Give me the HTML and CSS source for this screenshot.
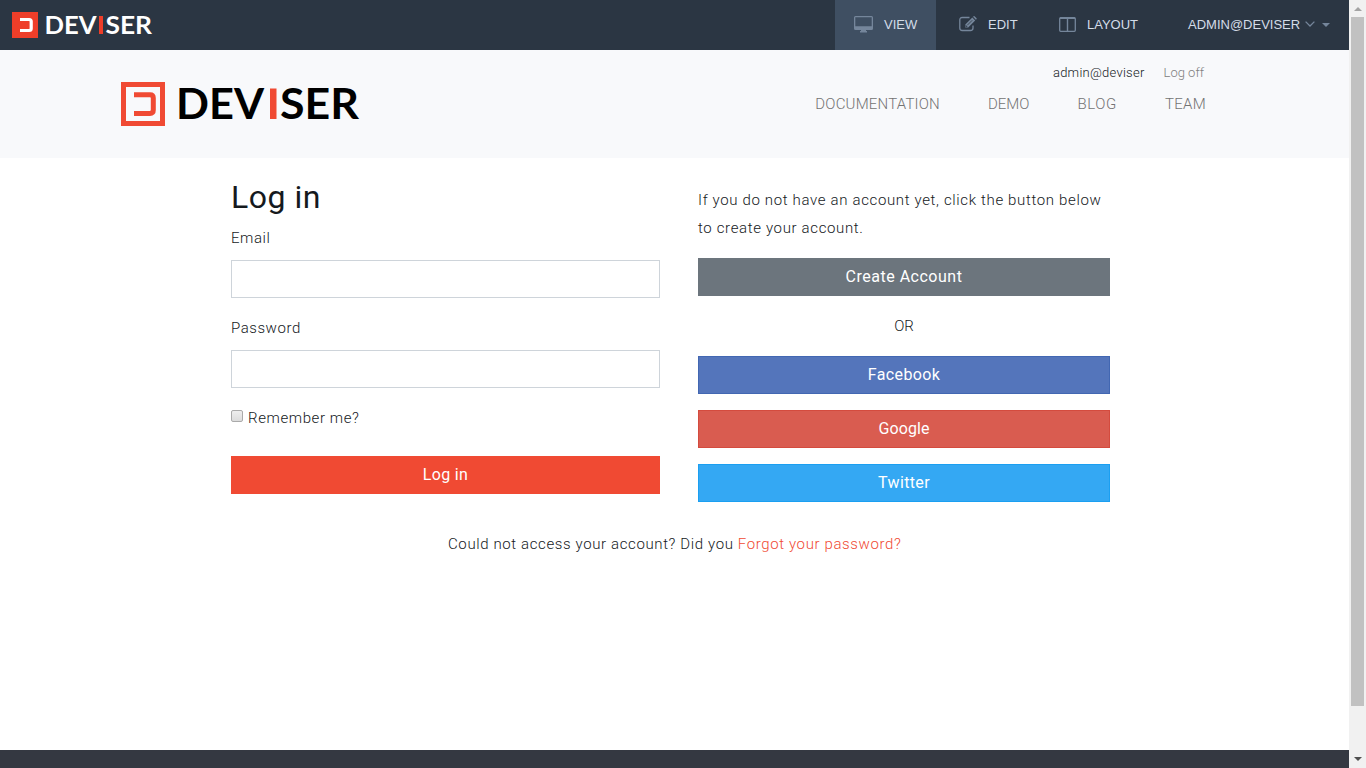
FILE: index.html
```
<!DOCTYPE html>
<html lang="en">
<head>
<meta charset="utf-8">
<title>Log in - Deviser</title>
<link rel="stylesheet" href="styles.css">
</head>
<body>
<div class="page">
  <nav class="admin-bar">
    <svg class="admin-logo" width="148" height="38" viewBox="0 -6 148 38">
      <rect x="0" y="1" width="26" height="26" fill="#ee3e29"/>
      <path d="M8 8.500h9.200q2 0 2 2v7q0 2-2 2H8" fill="none" stroke="#fff" stroke-width="3.200"/>
      <g class="logo-text light"><text x="32.500" y="23" textLength="52" lengthAdjust="spacingAndGlyphs">DEV</text><text x="93.500" y="23" textLength="46.500" lengthAdjust="spacingAndGlyphs">SER</text></g>
      <rect x="87" y="5" width="4" height="18" fill="#ee3e29"/>
    </svg>
    <div class="tabs">
      <a class="tab tab-view">
        <svg width="19" height="17" viewBox="0 0 19 17"><path fill="#75869b" fill-rule="evenodd" d="M1.500 0h16Q19 0 19 1.500v11q0 1.500-1.500 1.500H12v1h1v1.500H6V15h1v-1H1.500Q0 14 0 12.500v-11Q0 0 1.500 0zM1.300 1.300v9h16.400v-9z"/></svg>
        <span>VIEW</span>
      </a>
      <a class="tab tab-edit">
        <svg width="18" height="16" viewBox="0 0 18 16"><path d="M10.500 1.500H3.300Q.8 1.500.8 4v8q0 2.500 2.500 2.500h8.200q2.500 0 2.500-2.500V9.500" fill="none" stroke="#75869b" stroke-width="1.300"/><path d="M13.300 1.500l2.900 2.900-7 7H6.300V8.500zM14 .8l.6-.5q.6-.5 1.200.1l1.600 1.600q.6.600.1 1.200l-.6.600z" fill="#75869b"/><path d="M8.200 9.300l5-5M7 9.300v1.300h1.300" fill="none" stroke="#2b3643" stroke-width=".8"/></svg>
        <span>EDIT</span>
      </a>
      <a class="tab tab-layout">
        <svg width="17" height="15" viewBox="0 0 17 15"><rect x=".7" y=".7" width="15.600" height="13.600" rx="1" fill="none" stroke="#75869b" stroke-width="1.300"/><path d="M1 1.300h15M8.500 1v13" stroke="#75869b" stroke-width="1.400"/></svg>
        <span>LAYOUT</span>
      </a>
      <a class="tab tab-user"><span>ADMIN@DEVISER</span>
        <svg class="chevron" width="10" height="6" viewBox="0 0 10 6"><path d="M.6.600L5 5 9.400.600" fill="none" stroke="#75869b" stroke-width="1.300"/></svg>
        <svg class="caret" width="8" height="4" viewBox="0 0 8 4"><path d="M0 0h8L4 4z" fill="#75869b"/></svg>
      </a>
    </div>
  </nav>
  <header class="site-header">
    <svg class="site-logo" width="244" height="60" viewBox="0 -8 244 60">
      <rect x="2.500" y="2.500" width="39" height="39" fill="none" stroke="#f04a33" stroke-width="5"/>
      <path d="M13 12.800h16q3.300 0 3.300 3.300v12q0 3.300-3.300 3.300H13" fill="none" stroke="#f04a33" stroke-width="5"/>
      <g class="logo-text dark"><text x="55" y="37" textLength="88" lengthAdjust="spacingAndGlyphs">DEV</text><text x="159" y="37" textLength="79" lengthAdjust="spacingAndGlyphs">SER</text></g>
      <rect x="149" y="6.500" width="6.500" height="30.500" fill="#f04a33"/>
    </svg>
    <div class="header-right">
      <div class="account"><span class="user">admin@deviser</span><a class="logoff">Log off</a></div>
      <div class="menu"><a class="m-doc">DOCUMENTATION</a><a class="m-demo">DEMO</a><a class="m-blog">BLOG</a><a class="m-team">TEAM</a></div>
    </div>
  </header>
  <main class="content">
    <div class="columns">
      <form class="login">
        <h2>Log in</h2>
        <label class="l-email">Email</label>
        <input class="field" type="text">
        <label class="l-pass">Password</label>
        <input class="field" type="password">
        <div class="remember"><i class="checkbox"></i><span>Remember me?</span></div>
        <button class="btn primary" type="button">Log in</button>
      </form>
      <section class="signup">
        <p>If you do not have an account yet, click the button below<br>to create your account.</p>
        <button class="btn create">Create Account</button>
        <div class="or">OR</div>
        <button class="btn facebook">Facebook</button>
        <button class="btn google">Google</button>
        <button class="btn twitter">Twitter</button>
      </section>
    </div>
    <p class="forgot"><span>Could not access your account? Did you </span><a>Forgot your password?</a></p>
  </main>
  <footer class="footer"></footer>
</div>
<div class="scrollbar">
  <svg width="17" height="17" viewBox="0 0 17 17"><path d="M5 11h8L9 7z" fill="#a3a3a3"/></svg>
  <div class="thumb"></div>
  <svg width="17" height="17" viewBox="0 0 17 17"><path d="M5 6h8L9 10z" fill="#505050"/></svg>
</div>
</body>
</html>
```
FILE: styles.css
```
* { box-sizing: border-box; }
body { margin: 0; height: 768px; display: flex; overflow: hidden; background: #fff; color: #15191d; font-family: Roboto, "Liberation Sans", sans-serif; font-size: 15px; font-weight: 350; }
span, a { white-space: pre; }
svg { display: block; flex: none; overflow: visible; }
.page { width: 1349px; height: 768px; display: flex; flex-direction: column; }
.admin-bar { height: 50px; background: #2b3643; display: flex; justify-content: space-between; padding-left: 12px; }
.admin-logo { margin-top: 5px; }
.logo-text { font-family: Lato, sans-serif; font-weight: 700; }
.light { fill: #fff; font-size: 25px; }
.dark { fill: #000; font-size: 42.500px; }
.tabs { display: flex; }
.tab { height: 50px; display: flex; align-items: center; color: #d3dce8; font: 400 13px "Liberation Sans", sans-serif; padding-bottom: 2px; }
.tab-view { width: 101px; padding-left: 19px; gap: 11px; background: #3f4f62; }
.tab-edit { width: 102px; padding-left: 23px; gap: 11px; }
.tab-layout { width: 126px; padding-left: 21px; gap: 11px; }
.tab-user { width: 185px; padding-left: 24px; }
.chevron { margin-left: 5px; }
.caret { margin-left: 7px; margin-top: 2px; }
.site-header { height: 108px; background: #f8f9fb; display: flex; justify-content: space-between; padding: 0 143px 0 121px; }
.site-logo { margin-top: 24px; }
.header-right { display: flex; flex-direction: column; align-items: flex-end; padding-top: 15px; }
.account { display: flex; height: 16px; line-height: 16px; font-size: 13px; gap: 19px; padding-right: 2px; }
.user { letter-spacing: .25px; }
.logoff { color: #808080; }
.menu { display: flex; margin-top: 13px; line-height: 20px; gap: 48px; color: #737373; }
.m-doc { letter-spacing: .2px; }
.m-blog { letter-spacing: .6px; }
.m-team { letter-spacing: .3px; }
.content { height: 592px; padding-top: 23px; }
.columns { display: flex; gap: 38px; padding-left: 231px; height: 321px; }
.login { width: 429px; display: flex; flex-direction: column; }
.login h2 { margin: 0 0 1px; font-size: 32px; font-weight: 400; line-height: 32px; letter-spacing: .5px; }
.login label { line-height: 28px; margin-top: 10px; letter-spacing: .55px; }
.field { height: 38px; border: 1px solid #ced4da; margin: 8px 0 6px; padding: 0 12px; }
.remember { display: flex; gap: 5px; line-height: 28px; margin-top: 10px; letter-spacing: .6px; }
.checkbox { width: 12px; height: 12px; margin-top: 6px; border: 1px solid #aaa; border-radius: 2px; background: linear-gradient(#eee, #dcdcdc); }
.btn { display: block; width: 100%; height: 38px; border: 1px solid; padding: 0; color: #fff; font: 400 16px/36px Roboto, sans-serif; letter-spacing: .35px; }
.primary { background: #f04a33; border-color: #f04a33; margin-top: 24px; }
.signup { width: 412px; }
.signup p { margin: 5px 0 16px; line-height: 28px; letter-spacing: .65px; white-space: nowrap; }
.signup .create { background: #6c757d; border-color: #6c757d; letter-spacing: .5px; }
.or { margin: 16px 0; line-height: 28px; text-align: center; }
.facebook { background: #5475bb; border-color: #4267b2; margin-bottom: 16px; }
.signup .google { background: #d95c50; border-color: #d44b3e; margin-bottom: 16px; letter-spacing: .1px; }
.twitter { background: #34a8f3; border-color: #1b9ff1; }
.forgot { margin: 28px 0 0; line-height: 28px; padding-left: 448px; letter-spacing: .62px; }
.forgot a { color: #f04a33; }
.footer { height: 18px; background: #343841; }
.scrollbar { width: 17px; height: 768px; background: #f1f1f1; display: flex; flex-direction: column; }
.thumb { height: 689px; width: 13px; margin: 0 2px 45px; background: #c1c1c1; }
```
